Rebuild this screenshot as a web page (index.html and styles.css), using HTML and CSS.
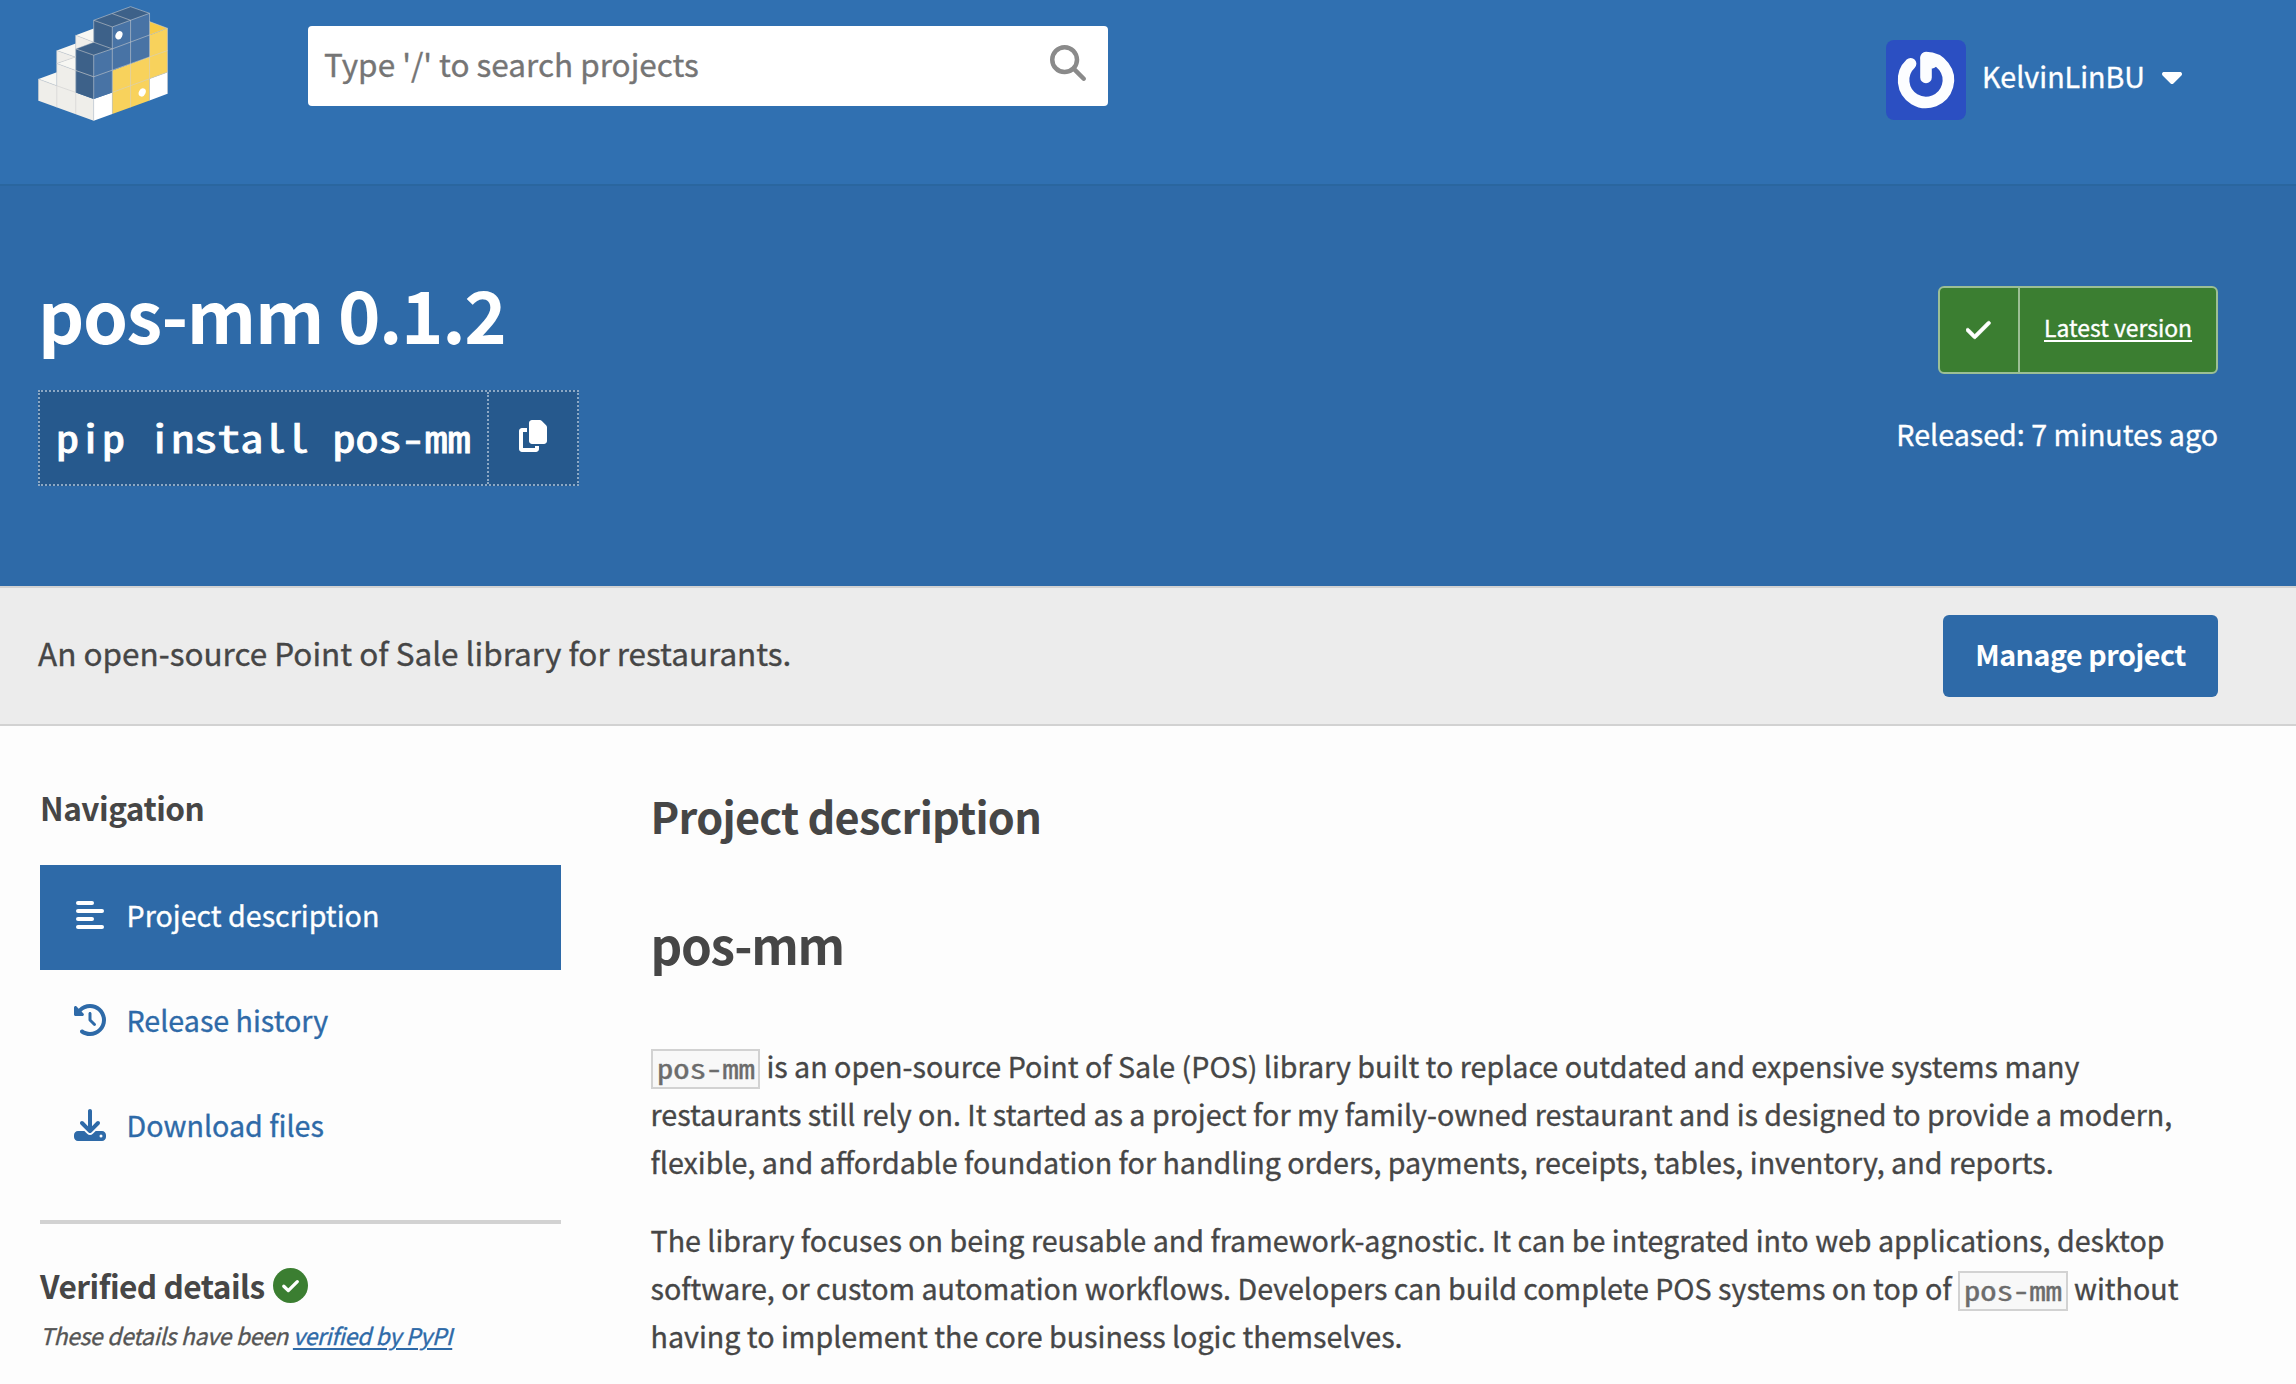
FILE: index.html
```html
<!DOCTYPE html>
<html lang="en">
<head>
<meta charset="utf-8">
<title>pos-mm · PyPI</title>
<link rel="stylesheet" href="styles.css">
</head>
<body>
<header class="site-header">
  <a class="logo" href="#" aria-label="PyPI">
    <svg viewBox="114 17 390 346" width="130" height="115">
      <g fill="#f7f7f3"><path d="M115 237L170 216V257zM170 190L227 170V211zM170 151L227 130V171zM227 105L281 85V126z"/></g>
      <g fill="#efeeea"><path d="M115 237L170 257V190L227 211V277L281 297V362L115 302zM170 151L227 171L170 190zM227 105L281 126L227 146z"/></g>
      <path fill="#fff" d="M281 297L337 277V342L281 362zM449 236L503 216V281L449 301z"/>
      <path fill="#f7ca45" d="M449 64L503 84L449 105z"/>
      <path fill="#f8d25c" d="M449 105L503 84V216L449 236V301L337 342V211L449 170z"/>
      <path fill="#3d6189" d="M227 146L281 126V60L392 19L449 39L337 80V146L281 165V297L227 277z"/>
      <path fill="#4873a5" d="M281 165L337 146V80L449 39V170L337 211V277L281 297z"/>
      <g fill="none" stroke="#cfcfcf" stroke-width="2.4">
        <path opacity=".8" d="M115 302V237L170 257V322M170 257L227 277V342M170 257V151L227 171M170 190L227 211L281 230M170 190L227 170M227 146V105L281 126"/>
        <path opacity=".7" d="M281 362V165L227 146V277M281 165L337 146M227 146L281 126L337 146V342M281 126V60L337 80V146M281 60L392 19L449 39L337 80M337 40L392 60V322M449 39V301M503 84V281M281 230L503 151M337 146L503 84M337 277L503 216M449 64L503 84"/>
      </g>
      <ellipse cx="357" cy="105" rx="10" ry="13" transform="rotate(25 357 105)" fill="#fff"/>
      <ellipse cx="427" cy="277" rx="10" ry="13" transform="rotate(25 427 277)" fill="#fff"/>
    </svg>
  </a>
  <div class="search">
    <span class="search-hint">Type '/' to search projects</span>
    <svg viewBox="0 0 512 512" width="36" height="36" fill="#8a8a8a"><path d="M416 208c0 45.900-14.900 88.300-40 122.700L502.600 457.400c12.500 12.500 12.500 32.800 0 45.300s-32.800 12.500-45.300 0L330.700 376c-34.400 25.200-76.800 40-122.700 40C93.100 416 0 322.900 0 208S93.100 0 208 0S416 93.100 416 208zM208 352a144 144 0 1 0 0-288 144 144 0 1 0 0 288z"/></svg>
  </div>
  <div class="user">
    <svg class="avatar" viewBox="0 0 80 80" width="80" height="80">
      <rect width="80" height="80" fill="#2b4fc2"/>
      <g fill="none" stroke="#fcfdff" stroke-width="11.6" stroke-linecap="round" stroke-linejoin="round">
        <path d="M40 37.500V17.600A22.400 22.400 0 1 1 24.600 23.700"/>
        <path d="M40 18L46 23" stroke-width="11"/>
      </g>
    </svg>
    <span class="user-name">KelvinLinBU</span>
    <svg class="caret" viewBox="0 0 320 512" width="20" height="32" fill="#fff"><path d="M137.400 374.600c12.500 12.500 32.800 12.500 45.300 0l128-128c9.200-9.200 11.900-22.900 6.900-34.900s-16.600-19.800-29.600-19.800L32 192c-12.900 0-24.600 7.800-29.600 19.800s-2.200 25.700 6.900 34.900l128 128z"/></svg>
  </div>
</header>

<section class="banner">
  <div class="banner-left">
    <h1 class="package-name">pos-mm 0.1.2</h1>
    <div class="pip">
      <code class="pip-command"><span class="wide">pip install pos-mm</span></code>
      <span class="pip-copy"><svg viewBox="0 0 448 512" width="28" height="32" fill="#fff"><path d="M208 0H332.100c12.700 0 24.900 5.100 33.900 14.100l67.900 67.900c9 9 14.100 21.200 14.100 33.900V336c0 26.500-21.500 48-48 48H208c-26.500 0-48-21.500-48-48V48c0-26.500 21.500-48 48-48zM48 128h80v64H64V448H256V416h64v48c0 26.500-21.500 48-48 48H48c-26.500 0-48-21.500-48-48V176c0-26.500 21.500-48 48-48z"/></svg></span>
    </div>
  </div>
  <div class="banner-right">
    <div class="status">
      <span class="status-icon"><svg viewBox="0 0 448 512" width="24.500" height="28" fill="#fff" stroke="#fff" stroke-width="12"><path d="M438.600 105.400c12.500 12.500 12.500 32.800 0 45.300l-256 256c-12.500 12.500-32.800 12.500-45.300 0l-128-128c-12.500-12.500-12.500-32.800 0-45.300s32.800-12.500 45.300 0L160 338.700 393.400 105.400c12.500-12.500 32.800-12.500 45.300 0z"/></svg></span>
      <a class="status-link" href="#">Latest version</a>
    </div>
    <p class="released">Released: 7 minutes ago</p>
  </div>
</section>

<section class="summary">
  <p class="summary-text">An open-source Point of Sale library for restaurants.</p>
  <a class="button" href="#">Manage project</a>
</section>

<main class="page">
  <aside class="sidebar">
    <h3 class="side-title">Navigation</h3>
    <nav class="tabs">
      <a class="tab tab-active" href="#"><svg viewBox="0 0 32 32" width="32" height="32" fill="#fff"><rect x="2" y="2" width="18" height="4" rx="2"/><rect x="2" y="10" width="28" height="4" rx="2"/><rect x="2" y="18" width="18" height="4" rx="2"/><rect x="2" y="26" width="28" height="4" rx="2"/></svg>Project description</a>
      <a class="tab" href="#"><svg viewBox="0 0 512 512" width="32" height="32" fill="currentColor"><path d="M75 75L41 41C25.900 25.900 0 36.600 0 57.900V168c0 13.300 10.700 24 24 24H134.100c21.400 0 32.100-25.900 17-41l-30.800-30.800C155 85.500 203 64 256 64c106 0 192 86 192 192s-86 192-192 192c-40.800 0-78.600-12.700-109.700-34.400c-14.500-10.100-34.400-6.600-44.600 7.900s-6.600 34.400 7.900 44.600C151.200 495 201.700 512 256 512c141.400 0 256-114.600 256-256S397.400 0 256 0C185.300 0 121.300 28.700 75 75zm181 53c-13.300 0-24 10.700-24 24V256c0 6.400 2.500 12.500 7 17l72 72c9.400 9.400 24.600 9.400 33.900 0s9.400-24.600 0-33.900l-65-65V152c0-13.300-10.700-24-24-24z"/></svg>Release history</a>
      <a class="tab" href="#"><svg viewBox="0 0 512 512" width="32" height="32" fill="currentColor"><path d="M288 32c0-17.700-14.300-32-32-32s-32 14.300-32 32V274.700l-73.400-73.400c-12.500-12.500-32.800-12.500-45.300 0s-12.500 32.800 0 45.300l128 128c12.500 12.500 32.800 12.500 45.300 0l128-128c12.500-12.500 12.500-32.800 0-45.300s-32.800-12.500-45.300 0L288 274.700V32zM64 352c-35.300 0-64 28.700-64 64v32c0 35.300 28.700 64 64 64H448c35.300 0 64-28.700 64-64V416c0-35.300-28.700-64-64-64H346.500l-45.300 45.300c-25 25-65.500 25-90.500 0L165.500 352H64zm368 56a24 24 0 1 1 0 48 24 24 0 1 1 0-48z"/></svg>Download files</a>
    </nav>
    <div class="verified">
      <h3 class="verified-title">Verified details<svg viewBox="0 0 35 35" width="35" height="35"><circle cx="17.500" cy="17.500" r="17.500" fill="#3b7e31"/><path d="M10.800 18.200L15.300 22.600L24.300 13.700" fill="none" stroke="#fff" stroke-width="3.300" stroke-linecap="round" stroke-linejoin="round"/></svg></h3>
      <p class="verified-note">These details have been <a href="#">verified by PyPI</a></p>
    </div>
  </aside>
  <article class="content">
    <h2 class="content-title">Project description</h2>
    <h1 class="readme-title">pos-mm</h1>
    <p><code><span class="wide">pos-mm</span></code> is an open-source Point of Sale (POS) library built to replace outdated and expensive systems many restaurants still rely on. It started as a project for my family-owned restaurant and is designed to provide a modern, flexible, and affordable foundation for handling orders, payments, receipts, tables, inventory, and reports.</p>
    <p>The library focuses on being reusable and framework-agnostic. It can be integrated into web applications, desktop software, or custom automation workflows. Developers can build complete POS systems on top of <code><span class="wide">pos-mm</span></code> without having to implement the core business logic themselves.</p>
  </article>
</main>
</body>
</html>
```
FILE: styles.css
```css
* { box-sizing: border-box; }
body {
  margin: 0;
  height: 1384px;
  overflow: hidden;
  background: #fdfdfd;
  color: #464646;
  font-family: "Noto Sans CJK SC", "Noto Sans", sans-serif;
  font-size: 28.65px;
  line-height: 48px;
  -webkit-text-stroke: 0.35px;
}
h1, h2, h3, p { margin: 0; }
h1, h2, h3, .button { -webkit-text-stroke: 0; }
svg { display: block; flex: none; }
a { color: #2e6aa8; text-decoration: none; }

.site-header {
  display: flex;
  align-items: flex-start;
  height: 186px;
  padding: 0 114px 0 38px;
  background: #3070b1;
  border-bottom: 2px solid #2a669f;
}
.logo { padding-top: 6px; }
.search {
  display: flex;
  align-items: center;
  justify-content: space-between;
  width: 800px;
  height: 80px;
  margin: 26px 0 0 140px;
  padding: 0 22px 6px 16px;
  background: #fff;
  border-radius: 4px;
}
.search-hint { color: #757575; font-size: 31.5px; }
.user { display: flex; align-items: center; margin: 40px 0 0 auto; color: #fff; }
.avatar { border-radius: 8px; }
.user-name { margin-left: 16px; padding-bottom: 8px; }
.caret { margin: 0 0 8px 17px; }

.banner {
  display: flex;
  justify-content: space-between;
  height: 400px;
  padding: 86px 78px 0 38px;
  background: #2e6aa8;
  color: #fff;
}
.package-name { padding-top: 1px; font-size: 72px; line-height: 80px; font-weight: 700; letter-spacing: -1.35px; }
.pip { display: flex; width: 541px; height: 96px; margin-top: 37px; background: #26598d; border: 2px dotted #8ca8c4; }
.pip-command {
  flex: 1;
  padding-left: 16px;
  border-right: 2px dotted #8ca8c4;
  font-family: "Noto Sans Mono CJK SC", "Liberation Mono", monospace;
  font-size: 38.4px;
  line-height: 88px;
  -webkit-text-stroke: 0.8px;
}
/* Half-width Latin glyphs stretched back to a 0.6em advance */
.wide { display: inline-block; transform: scaleX(1.2); transform-origin: left; }
.pip-copy { display: flex; align-items: center; justify-content: center; width: 88px; padding-bottom: 4px; }
.banner-right { display: flex; flex-direction: column; align-items: flex-end; padding-top: 14px; }
.status { display: flex; width: 280px; height: 88px; background: #3b7e31; border: 2px solid #9cbf94; border-radius: 6px; }
.status-icon { display: flex; align-items: center; justify-content: center; width: 80px; padding-right: 1px; border-right: 2px solid #9cbf94; }
.status-link { padding-left: 24px; color: #fff; font-size: 22.9px; line-height: 79px; text-decoration: underline; text-decoration-thickness: 2px; text-underline-offset: 3px; }
.released { margin-top: 36px; }

.summary {
  display: flex;
  align-items: center;
  justify-content: space-between;
  height: 140px;
  padding: 0 78px 0 38px;
  background: #ececec;
  border: solid #d2d2d2;
  border-width: 2px 0;
}
.summary-text { padding-bottom: 8px; font-size: 31.5px; }
.button { width: 275px; height: 82px; background: #2e6aa8; border-radius: 6px; color: #fff; font-weight: 700; line-height: 78px; text-align: center; letter-spacing: -0.46px; }

.page { display: flex; gap: 89.5px; padding: 57px 78px 0 40px; }
.sidebar { flex: none; width: 521px; }
.side-title, .verified-title { font-size: 31.6px; line-height: 48px; font-weight: 700; letter-spacing: -0.5px; }
.tabs { margin-top: 34px; }
.tab { display: flex; align-items: center; gap: 20.5px; height: 105px; padding: 0 0 5px 34px; }
.tab-active { background: #2e6aa8; color: #fff; }
.verified { margin-top: 40px; padding-top: 37px; border-top: 4px solid #d2d2d2; }
.verified-title { display: flex; align-items: center; gap: 8px; }
.verified-note { margin-top: 8px; font-size: 22.9px; line-height: 36px; font-style: italic; color: #555; letter-spacing: -0.3px; }
.verified-note a { text-decoration: underline; text-decoration-thickness: 2px; text-underline-offset: 3px; }

.content { flex: 1; padding-top: 2px; }
.content-title { font-size: 43.2px; line-height: 60px; font-weight: 700; letter-spacing: -0.72px; }
.readme-title { margin: 64px 0 63px; font-size: 49.4px; line-height: 70px; font-weight: 700; letter-spacing: -1.27px; }
.content p { margin-bottom: 30px; }
.content code {
  display: inline-block;
  width: 109.5px;
  height: 40px;
  padding-left: 4px;
  vertical-align: -1px;
  background: #f8f8f8;
  border: 2px solid #d2d2d2;
  color: #6c6c6c;
  font-family: "Noto Sans Mono CJK SC", "Liberation Mono", monospace;
  font-size: 27.2px;
  line-height: 32px;
  -webkit-text-stroke: 0.3px;
}
```
